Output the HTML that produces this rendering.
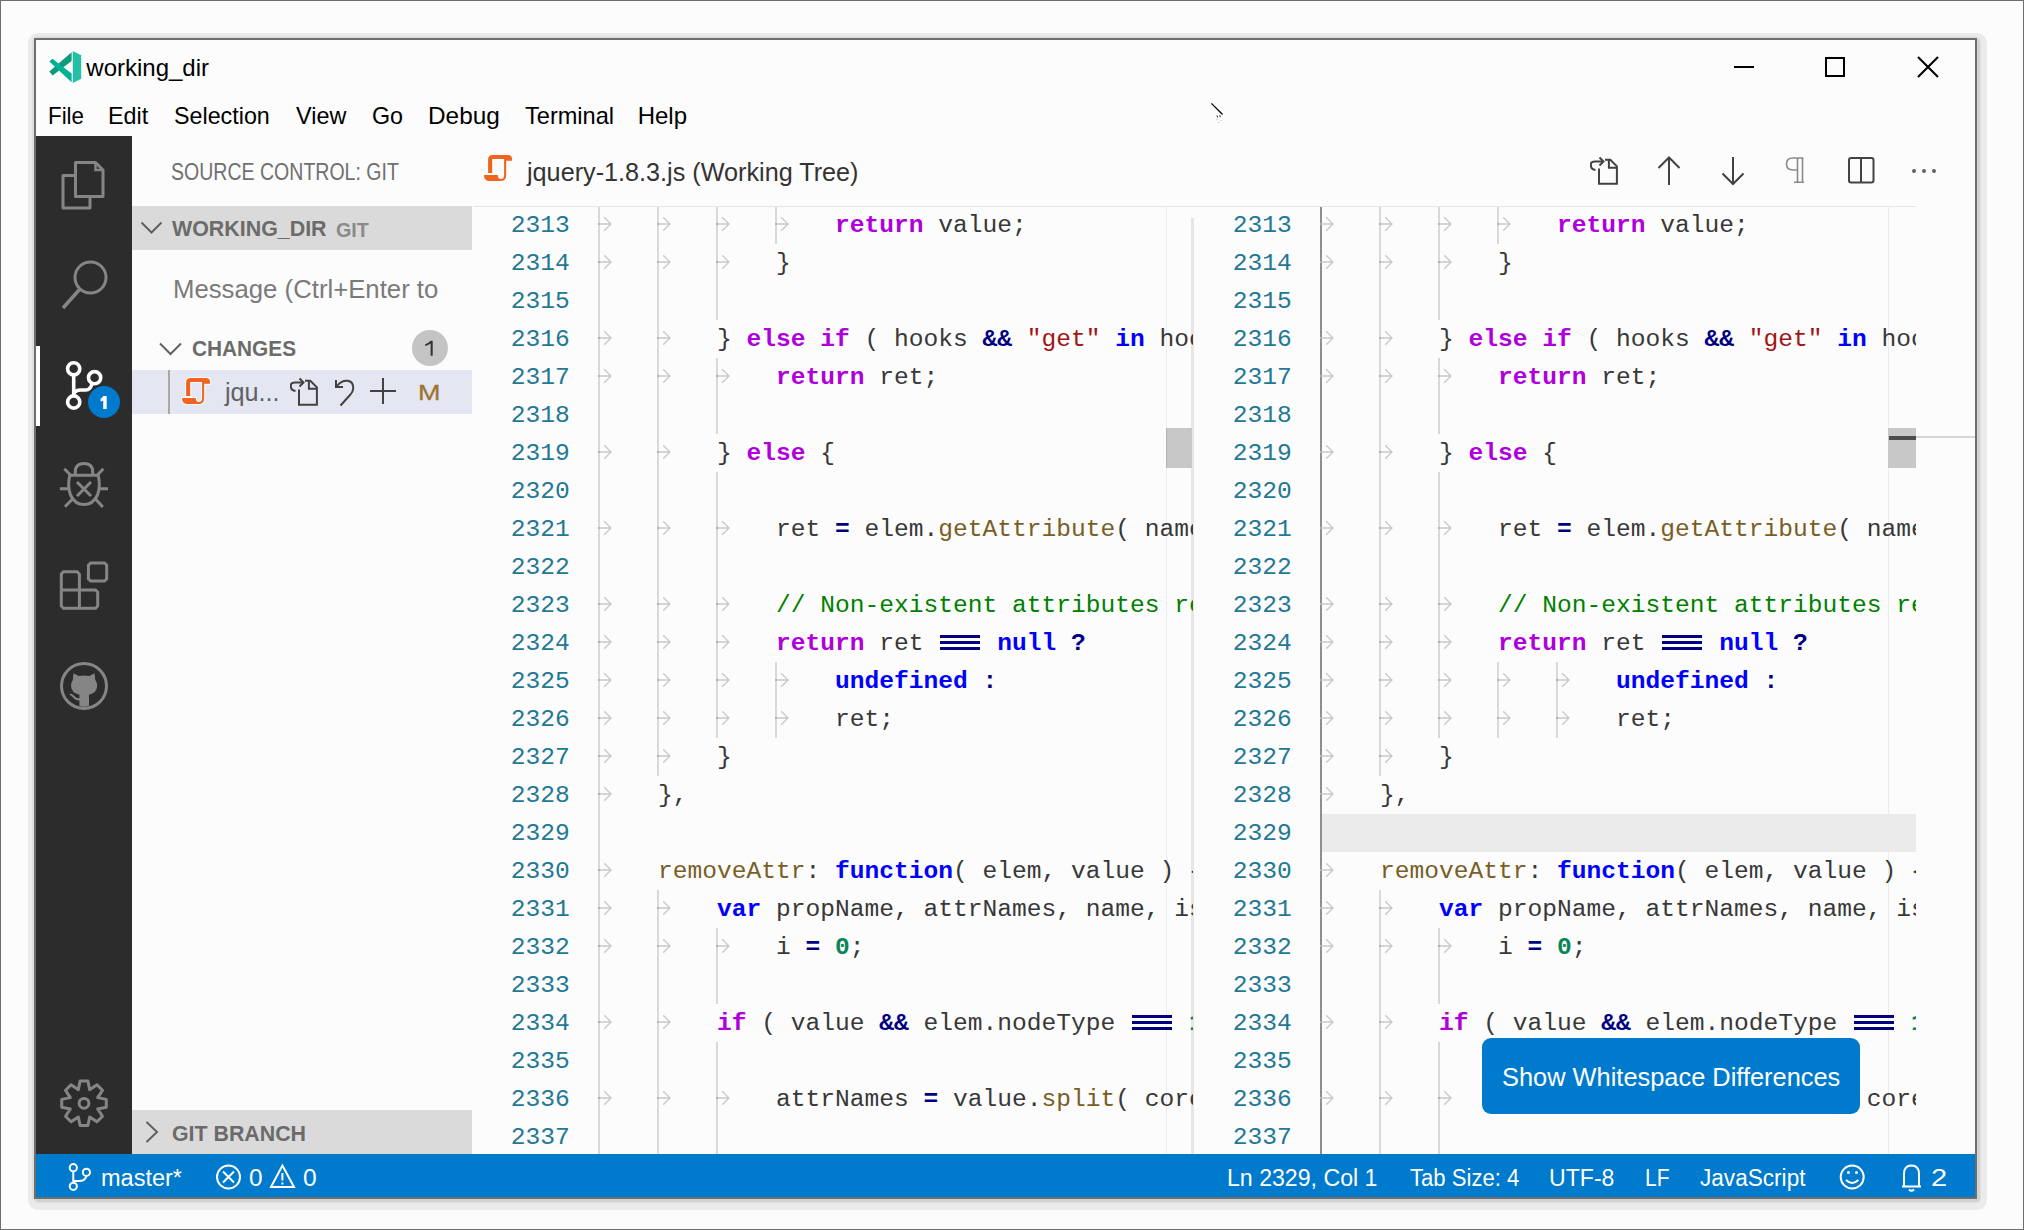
<!DOCTYPE html>
<html><head><meta charset="utf-8"><style>
html,body{margin:0;padding:0}
body{width:2024px;height:1230px;position:relative;overflow:hidden;background:#fcfcfc;font-family:"Liberation Sans",sans-serif}
.t{position:absolute;line-height:0;white-space:pre}
.ln{position:absolute;font-family:"Liberation Mono",monospace;font-size:24.59px;line-height:38px;height:38px;color:#237893;white-space:pre}
.cl{position:absolute;font-family:"Liberation Mono",monospace;font-size:24.59px;line-height:38px;height:38px;white-space:pre}
.eq{display:inline-block;vertical-align:top;height:38px;width:44.25px;background:linear-gradient(#000080,#000080) 2px 10.5px/40px 3px no-repeat,linear-gradient(#000080,#000080) 2px 16.2px/40px 3px no-repeat,linear-gradient(#000080,#000080) 2px 22px/40px 3px no-repeat}
</style></head><body>
<div style="position:absolute;left:28px;top:33px;width:1959px;height:1177px;background:#ebebeb;border-radius:10px"></div>
<div style="position:absolute;left:32px;top:36px;width:1949px;height:1167px;background:#dfdfdf;border-radius:6px"></div>
<div style="position:absolute;left:36px;top:40px;width:1944px;height:1162px;background:#d3d3d3;border-radius:3px"></div>
<div style="position:absolute;left:34px;top:38px;width:1943px;height:1161px;box-sizing:border-box;border:2px solid #6e6e6e;background:#fcfcfc"></div>
<div style="position:absolute;left:0;top:0;width:2024px;height:1230px;box-sizing:border-box;border:1px solid #6e6e6e"></div>
<svg style="position:absolute;left:49px;top:51px" width="33" height="33" viewBox="0 0 33 33">
<path d="M0.3 20.6 L22.6 1.2 L22.6 10.1 L3.6 24.4 Z" fill="#0d9b7b"/>
<path d="M0.3 10.6 L3.4 7.7 L22.6 22.5 L22.6 31.2 Z" fill="#00b294"/>
<path d="M23.8 0 L32.2 4.3 L32.2 27.8 L23.8 32 Z" fill="#24bfa5"/>
</svg>
<span class="t" style="left:86.30px;top:68.28px;font-family:'Liberation Sans';font-size:24.00px;font-weight:400;color:#000;">working_dir</span>
<div style="position:absolute;left:1734px;top:66px;width:20px;height:2px;background:#000"></div>
<div style="position:absolute;left:1825px;top:57px;width:20px;height:20px;box-sizing:border-box;border:2px solid #000"></div>
<svg style="position:absolute;left:1916px;top:55px" width="24" height="24" viewBox="0 0 24 24"><path d="M2 2 L22 22 M22 2 L2 22" stroke="#000" stroke-width="2.1"/></svg>
<svg style="position:absolute;left:1205px;top:98px" width="24" height="26" viewBox="0 0 24 26"><path d="M6.4 5.4 L17.6 16.5" stroke="#000" stroke-width="1.3"/><path d="M12 17.5 l0.6 2 M14.8 17.2 l0.5 2 M11.7 21 l0.2 0.3 M13 24 l0.3 0.3 M15.5 22 l0.3 0.3" stroke="#222" stroke-width="1"/></svg>
<span class="t" style="left:47.64px;top:115.68px;font-family:'Liberation Sans';font-size:24.00px;font-weight:400;color:#000;transform:scaleX(0.9306);transform-origin:0 0;">File</span>
<span class="t" style="left:107.66px;top:115.68px;font-family:'Liberation Sans';font-size:24.00px;font-weight:400;color:#000;transform:scaleX(0.9718);transform-origin:0 0;">Edit</span>
<span class="t" style="left:174.23px;top:115.68px;font-family:'Liberation Sans';font-size:24.00px;font-weight:400;color:#000;transform:scaleX(0.9701);transform-origin:0 0;">Selection</span>
<span class="t" style="left:296.00px;top:115.68px;font-family:'Liberation Sans';font-size:24.00px;font-weight:400;color:#000;transform:scaleX(0.9750);transform-origin:0 0;">View</span>
<span class="t" style="left:371.63px;top:115.68px;font-family:'Liberation Sans';font-size:24.00px;font-weight:400;color:#000;transform:scaleX(0.9700);transform-origin:0 0;">Go</span>
<span class="t" style="left:427.67px;top:115.68px;font-family:'Liberation Sans';font-size:24.00px;font-weight:400;color:#000;transform:scaleX(1.0149);transform-origin:0 0;">Debug</span>
<span class="t" style="left:524.60px;top:115.68px;font-family:'Liberation Sans';font-size:24.00px;font-weight:400;color:#000;transform:scaleX(0.9820);transform-origin:0 0;">Terminal</span>
<span class="t" style="left:637.70px;top:115.68px;font-family:'Liberation Sans';font-size:24.00px;font-weight:400;color:#000;">Help</span>
<div style="position:absolute;left:36px;top:136px;width:96px;height:1018px;background:#2c2c2c"></div>
<div style="position:absolute;left:36px;top:346px;width:4px;height:80px;background:#fff"></div>
<svg style="position:absolute;left:36px;top:136px" width="96" height="1018" viewBox="36 136 96 1018" fill="none" stroke="#858585" stroke-width="3">
<path d="M75.5 175.5 L63 175.5 L63 208 L90 208 L90 197" stroke-linejoin="round"/>
<path d="M75.5 162.5 L95.5 162.5 L103 170 L103 196.5 L75.5 196.5 Z" stroke-linejoin="round"/>
<path d="M95.5 162.5 L95.5 170 L103 170" stroke-width="2.5"/>
<circle cx="90.5" cy="277.5" r="15.5"/>
<path d="M79.5 289.5 L63 308" stroke-width="3.5"/>
</svg>
<svg style="position:absolute;left:36px;top:136px" width="96" height="1018" viewBox="36 136 96 1018" fill="none" stroke="#fff" stroke-width="3.6">
<circle cx="73.7" cy="368.8" r="6.1"/>
<circle cx="94.6" cy="377.7" r="6.1"/>
<circle cx="73.7" cy="402" r="6.1"/>
<path d="M73.7 375 L73.7 396"/>
<path d="M73.7 394 Q 75 390 81 390 L86 390 Q 90 390 92 384"/>
</svg>
<div style="position:absolute;left:88px;top:386px;width:32px;height:32px;border-radius:50%;background:#007acc"></div>
<svg style="position:absolute;left:96px;top:392px" width="16" height="20" viewBox="96 392 16 20"><path d="M103.2 396 L106.7 396 L106.7 409 L103.2 409 L103.2 400.4 Q102 401.2 100.6 401.6 L100.6 398.7 Q102.6 397.9 103.2 396 Z" fill="#fff"/></svg>
<svg style="position:absolute;left:36px;top:136px" width="96" height="1018" viewBox="36 136 96 1018" fill="none" stroke="#858585" stroke-width="3">
<path d="M75.3 475 L75.3 472 Q 75.3 463.6 84 463.6 Q 92.7 463.6 92.7 472 L92.7 475"/>
<path d="M69.8 475.2 L98.2 475.2 Q 100.8 486 97.5 495 Q 93 504.6 84 504.6 Q 75 504.6 70.5 495 Q 67.2 486 69.8 475.2 Z" stroke-linejoin="round"/>
<path d="M64.3 468.8 L70.5 475 M103.3 468.8 L97.5 475 M59.8 488.8 L68 488.8 M108 488.8 L100 488.8 M65 506.8 L72.5 499 M102.8 507 L95.5 499"/>
<path d="M77 482 L91 496 M91 482 L77 496"/>
</svg>
<svg style="position:absolute;left:36px;top:136px" width="96" height="1018" viewBox="36 136 96 1018" fill="none" stroke="#858585" stroke-width="3" stroke-linejoin="round">
<path d="M61.3 574 L63.5 571.8 L77.2 571.8 L79.4 574 L79.4 589.9 L95.5 589.9 L97.7 592.1 L97.7 606 L95.5 608.2 L63.5 608.2 L61.3 606 Z" stroke-linejoin="miter"/>
<path d="M61.3 589.9 L79.4 589.9 L79.4 608.2"/>
<path d="M88.4 565.2 L90.6 563 L104.5 563 L106.7 565.2 L106.7 578.9 L104.5 581.1 L90.6 581.1 L88.4 578.9 Z" stroke-linejoin="miter"/>
</svg>
<svg style="position:absolute;left:36px;top:136px" width="96" height="1018" viewBox="36 136 96 1018">
<circle cx="84" cy="686" r="22.5" fill="none" stroke="#858585" stroke-width="3"/>
<path d="M73.5 673.3 L78.8 676 Q84 675 89.5 676 L94.5 673.3 L95.3 680 Q97.5 683 97.2 686 Q96.8 693 89 694.8 L89 706 Q84 707.5 79.4 706 L79.4 700.4 Q75.5 700.8 73.2 697.8 Q71.8 695.8 69.5 694.8 L70.3 693.4 Q73 694 75 696.4 Q76.8 698.4 79.4 698.3 L79.4 694.8 Q71.5 693 71 686 Q70.8 683 72.8 680 Z" fill="#858585"/>
</svg>
<svg style="position:absolute;left:36px;top:136px" width="96" height="1018" viewBox="36 136 96 1018" fill="none" stroke="#858585" stroke-width="3" stroke-linejoin="round">
<path d="M78.34 1089.63 L80.08 1081.04 L87.92 1081.04 L89.66 1089.63 L96.96 1084.79 L102.51 1090.34 L97.67 1097.64 L106.26 1099.38 L106.26 1107.22 L97.67 1108.96 L102.51 1116.26 L96.96 1121.81 L89.66 1116.97 L87.92 1125.56 L80.08 1125.56 L78.34 1116.97 L71.04 1121.81 L65.49 1116.26 L70.33 1108.96 L61.74 1107.22 L61.74 1099.38 L70.33 1097.64 L65.49 1090.34 L71.04 1084.79 Z"/>
<circle cx="84" cy="1103.3" r="4.9"/>
</svg>
<span class="t" style="left:171.45px;top:172.23px;font-family:'Liberation Sans';font-size:23.00px;font-weight:400;color:#6f6f6f;transform:scaleX(0.8491);transform-origin:0 0;">SOURCE CONTROL: GIT</span>
<div style="position:absolute;left:132px;top:206px;width:340px;height:44px;background:#dadada"></div>
<svg style="position:absolute;left:132px;top:200px" width="340" height="1000" viewBox="132 200 340 1000" fill="none" stroke="#616161" stroke-width="2"><path d="M141.5 222.5 L151.5 232.5 L161.5 222.5"/><path d="M160 343.5 L170.5 354 L181 343.5"/></svg>
<span class="t" style="left:172.30px;top:229.18px;font-family:'Liberation Sans';font-size:22.00px;font-weight:700;color:#6b6b6b;transform:scaleX(0.9728);transform-origin:0 0;">WORKING_DIR</span>
<span class="t" style="left:335.59px;top:229.74px;font-family:'Liberation Sans';font-size:19.50px;font-weight:700;color:#8a8a8a;transform:scaleX(1.0129);transform-origin:0 0;">GIT</span>
<span class="t" style="left:173.28px;top:288.96px;font-family:'Liberation Sans';font-size:25.50px;font-weight:400;color:#7a7a7a;transform:scaleX(1.0092);transform-origin:0 0;">Message (Ctrl+Enter to</span>
<span class="t" style="left:191.55px;top:348.98px;font-family:'Liberation Sans';font-size:22.00px;font-weight:700;color:#6b6b6b;transform:scaleX(0.9454);transform-origin:0 0;">CHANGES</span>
<div style="position:absolute;left:412px;top:330px;width:36px;height:36px;border-radius:50%;background:#c4c4c4"></div>
<svg style="position:absolute;left:420px;top:336px" width="20" height="24" viewBox="420 336 20 24"><path d="M430.6 340.7 L432.7 340.7 L432.7 355.8 L430.6 355.8 L430.6 343.6 Q428.3 345.2 425.2 346 L425.2 344.2 Q428.6 343 430.6 340.7 Z" fill="#333"/></svg>
<div style="position:absolute;left:132px;top:370px;width:340px;height:44px;background:#e4e6f1"></div>
<div style="position:absolute;left:168px;top:370px;width:2px;height:44px;background:#a8a8a8"></div>
<svg style="position:absolute;left:176px;top:371px" width="40" height="40" viewBox="0 0 40 40"><path d="M10.1 25 L10.1 11.5 Q10.1 7 14.6 7 L30 7 Q34 7 34 11 L34 12.8 L28.2 12.8 L28.2 27 Q28.2 33 22.5 33 L11.5 33 Q6 33 6 27 L19.8 27 Q19.8 31 23 31 Q26.1 31 26.1 27 L26.1 11 L14.2 11 L14.2 25 Z" fill="#f0641f" stroke="#fafbff" stroke-width="2.2" paint-order="stroke"/></svg>
<span class="t" style="left:225.41px;top:392.44px;font-family:'Liberation Sans';font-size:25.00px;font-weight:400;color:#616161;transform:scaleX(1.0075);transform-origin:0 0;">jqu...</span>
<svg style="position:absolute;left:290px;top:377px" width="30" height="30" viewBox="0 0 30 30" fill="none" stroke="#424242" stroke-width="2"><path d="M9 12.5 L9 27.8 L26.9 27.8 L26.9 10.4 L20.3 3.8 L15 3.8" /><path d="M18.9 3.8 L18.9 11.8 L26.9 11.8" /><path d="M5.5 14 Q0.8 13.5 0.8 8.8 Q0.8 5.5 5 5.5 L13 5.5" /><path d="M9.5 1.5 L13.5 5.5 L9.5 9.5" /></svg>
<svg style="position:absolute;left:330px;top:376px" width="30" height="32" viewBox="0 0 30 32" fill="none" stroke="#424242" stroke-width="2"><path d="M7 10 Q11 4.5 17.5 4.8 Q23.5 5.5 23.2 12.5 Q23 16 20 19 L10.5 29.5"/><path d="M6 4 L6 11 L13 11"/></svg>
<div style="position:absolute;left:370px;top:390px;width:26px;height:2px;background:#424242"></div>
<div style="position:absolute;left:382px;top:378px;width:2px;height:26px;background:#424242"></div>
<span class="t" style="left:417.60px;top:393.30px;font-family:'Liberation Sans';font-size:22.50px;font-weight:400;color:#9c7432;transform:scaleX(1.2000);transform-origin:0 0;-webkit-text-stroke:0.3px #9c7432;">M</span>
<div style="position:absolute;left:132px;top:1110px;width:340px;height:44px;background:#dadada"></div>
<svg style="position:absolute;left:132px;top:1100px" width="100" height="60" viewBox="132 1100 100 60" fill="none" stroke="#616161" stroke-width="2"><path d="M146.5 1122 L157 1132 L146.5 1142"/></svg>
<span class="t" style="left:171.63px;top:1133.58px;font-family:'Liberation Sans';font-size:22.00px;font-weight:700;color:#6b6b6b;transform:scaleX(0.9706);transform-origin:0 0;">GIT BRANCH</span>
<svg style="position:absolute;left:478px;top:148px" width="40" height="40" viewBox="0 0 40 40"><path d="M10.1 25 L10.1 11.5 Q10.1 7 14.6 7 L30 7 Q34 7 34 11 L34 12.8 L28.2 12.8 L28.2 27 Q28.2 33 22.5 33 L11.5 33 Q6 33 6 27 L19.8 27 Q19.8 31 23 31 Q26.1 31 26.1 27 L26.1 11 L14.2 11 L14.2 25 Z" fill="#f0641f"/></svg>
<span class="t" style="left:527.29px;top:172.06px;font-family:'Liberation Sans';font-size:25.50px;font-weight:400;color:#333;transform:scaleX(0.9884);transform-origin:0 0;">jquery-1.8.3.js (Working Tree)</span>
<svg style="position:absolute;left:1590px;top:156px" width="30" height="30" viewBox="0 0 30 30" fill="none" stroke="#424242" stroke-width="2"><path d="M9 12.5 L9 27.8 L26.9 27.8 L26.9 10.4 L20.3 3.8 L15 3.8" /><path d="M18.9 3.8 L18.9 11.8 L26.9 11.8" /><path d="M5.5 14 Q0.8 13.5 0.8 8.8 Q0.8 5.5 5 5.5 L13 5.5" /><path d="M9.5 1.5 L13.5 5.5 L9.5 9.5" /></svg>
<svg style="position:absolute;left:1650px;top:150px" width="300" height="40" viewBox="1650 150 300 40" fill="none" stroke="#424242" stroke-width="2">
<path d="M1669 157.5 L1669 185 M1658.5 168 L1669 157.5 L1679.5 168"/>
<path d="M1733 157 L1733 184.5 M1722.5 173.5 L1733 184 L1743.5 173.5"/>
<rect x="1849" y="158" width="24.5" height="24.5" rx="2"/>
<path d="M1861 158 L1861 182.5"/>
</svg>
<svg style="position:absolute;left:1780px;top:150px" width="30" height="40" viewBox="1780 150 30 40" fill="none" stroke="#8a8a8a" stroke-width="1.6">
<path d="M1803.5 158 L1793 158 Q1786.5 158 1786.5 164 Q1786.5 170 1793 170 L1797.5 170"/>
<path d="M1797.5 158 L1797.5 182 M1802.5 158 L1802.5 182 M1794 182.3 L1804 182.3"/>
</svg>
<div style="position:absolute;left:1911.8px;top:168.7px;width:4.4px;height:4.4px;border-radius:50%;background:#616161"></div>
<div style="position:absolute;left:1921.8px;top:168.7px;width:4.4px;height:4.4px;border-radius:50%;background:#616161"></div>
<div style="position:absolute;left:1931.8px;top:168.7px;width:4.4px;height:4.4px;border-radius:50%;background:#616161"></div>
<div style="position:absolute;left:474px;top:206px;width:1442px;height:1px;background:#e6e6e6"></div>
<div style="position:absolute;left:1166px;top:207px;width:1px;height:947px;background:#ececec"></div>
<div style="position:absolute;left:1191px;top:218px;width:3px;height:936px;background:#e6e6e6"></div>
<div style="position:absolute;left:1888px;top:207px;width:1px;height:947px;background:#ececec"></div>
<div style="position:absolute;left:474px;top:207px;width:719px;height:947px;overflow:hidden"><svg style="position:absolute;left:0;top:0" width="719" height="947" viewBox="474 207 719 947"><rect x="598.0" y="206" width="2" height="38" fill="#d9d9d9"/><rect x="657.0" y="206" width="2" height="38" fill="#d9d9d9"/><rect x="716.0" y="206" width="2" height="38" fill="#d9d9d9"/><rect x="775.0" y="206" width="2" height="38" fill="#d9d9d9"/><rect x="598.0" y="223.0" width="2" height="2" fill="#b4b4b4"/><path d="M600.0 224.0 H611.0 M604.2 217.2 L611.0 224.0 L604.2 230.8" stroke="#c8c8c8" stroke-width="1.3" fill="none"/><rect x="657.0" y="223.0" width="2" height="2" fill="#b4b4b4"/><path d="M659.0 224.0 H670.0 M663.2 217.2 L670.0 224.0 L663.2 230.8" stroke="#c8c8c8" stroke-width="1.3" fill="none"/><rect x="716.0" y="223.0" width="2" height="2" fill="#b4b4b4"/><path d="M718.0 224.0 H729.0 M722.2 217.2 L729.0 224.0 L722.2 230.8" stroke="#c8c8c8" stroke-width="1.3" fill="none"/><rect x="775.0" y="223.0" width="2" height="2" fill="#b4b4b4"/><path d="M777.0 224.0 H788.0 M781.2 217.2 L788.0 224.0 L781.2 230.8" stroke="#c8c8c8" stroke-width="1.3" fill="none"/><rect x="598.0" y="244" width="2" height="38" fill="#d9d9d9"/><rect x="657.0" y="244" width="2" height="38" fill="#d9d9d9"/><rect x="716.0" y="244" width="2" height="38" fill="#d9d9d9"/><rect x="598.0" y="261.0" width="2" height="2" fill="#b4b4b4"/><path d="M600.0 262.0 H611.0 M604.2 255.2 L611.0 262.0 L604.2 268.8" stroke="#c8c8c8" stroke-width="1.3" fill="none"/><rect x="657.0" y="261.0" width="2" height="2" fill="#b4b4b4"/><path d="M659.0 262.0 H670.0 M663.2 255.2 L670.0 262.0 L663.2 268.8" stroke="#c8c8c8" stroke-width="1.3" fill="none"/><rect x="716.0" y="261.0" width="2" height="2" fill="#b4b4b4"/><path d="M718.0 262.0 H729.0 M722.2 255.2 L729.0 262.0 L722.2 268.8" stroke="#c8c8c8" stroke-width="1.3" fill="none"/><rect x="598.0" y="282" width="2" height="38" fill="#d9d9d9"/><rect x="657.0" y="282" width="2" height="38" fill="#d9d9d9"/><rect x="716.0" y="282" width="2" height="38" fill="#d9d9d9"/><rect x="598.0" y="320" width="2" height="38" fill="#d9d9d9"/><rect x="657.0" y="320" width="2" height="38" fill="#d9d9d9"/><rect x="598.0" y="337.0" width="2" height="2" fill="#b4b4b4"/><path d="M600.0 338.0 H611.0 M604.2 331.2 L611.0 338.0 L604.2 344.8" stroke="#c8c8c8" stroke-width="1.3" fill="none"/><rect x="657.0" y="337.0" width="2" height="2" fill="#b4b4b4"/><path d="M659.0 338.0 H670.0 M663.2 331.2 L670.0 338.0 L663.2 344.8" stroke="#c8c8c8" stroke-width="1.3" fill="none"/><rect x="598.0" y="358" width="2" height="38" fill="#d9d9d9"/><rect x="657.0" y="358" width="2" height="38" fill="#d9d9d9"/><rect x="716.0" y="358" width="2" height="38" fill="#d9d9d9"/><rect x="598.0" y="375.0" width="2" height="2" fill="#b4b4b4"/><path d="M600.0 376.0 H611.0 M604.2 369.2 L611.0 376.0 L604.2 382.8" stroke="#c8c8c8" stroke-width="1.3" fill="none"/><rect x="657.0" y="375.0" width="2" height="2" fill="#b4b4b4"/><path d="M659.0 376.0 H670.0 M663.2 369.2 L670.0 376.0 L663.2 382.8" stroke="#c8c8c8" stroke-width="1.3" fill="none"/><rect x="716.0" y="375.0" width="2" height="2" fill="#b4b4b4"/><path d="M718.0 376.0 H729.0 M722.2 369.2 L729.0 376.0 L722.2 382.8" stroke="#c8c8c8" stroke-width="1.3" fill="none"/><rect x="598.0" y="396" width="2" height="38" fill="#d9d9d9"/><rect x="657.0" y="396" width="2" height="38" fill="#d9d9d9"/><rect x="716.0" y="396" width="2" height="38" fill="#d9d9d9"/><rect x="598.0" y="434" width="2" height="38" fill="#d9d9d9"/><rect x="657.0" y="434" width="2" height="38" fill="#d9d9d9"/><rect x="598.0" y="451.0" width="2" height="2" fill="#b4b4b4"/><path d="M600.0 452.0 H611.0 M604.2 445.2 L611.0 452.0 L604.2 458.8" stroke="#c8c8c8" stroke-width="1.3" fill="none"/><rect x="657.0" y="451.0" width="2" height="2" fill="#b4b4b4"/><path d="M659.0 452.0 H670.0 M663.2 445.2 L670.0 452.0 L663.2 458.8" stroke="#c8c8c8" stroke-width="1.3" fill="none"/><rect x="598.0" y="472" width="2" height="38" fill="#d9d9d9"/><rect x="657.0" y="472" width="2" height="38" fill="#d9d9d9"/><rect x="716.0" y="472" width="2" height="38" fill="#d9d9d9"/><rect x="598.0" y="510" width="2" height="38" fill="#d9d9d9"/><rect x="657.0" y="510" width="2" height="38" fill="#d9d9d9"/><rect x="716.0" y="510" width="2" height="38" fill="#d9d9d9"/><rect x="598.0" y="527.0" width="2" height="2" fill="#b4b4b4"/><path d="M600.0 528.0 H611.0 M604.2 521.2 L611.0 528.0 L604.2 534.8" stroke="#c8c8c8" stroke-width="1.3" fill="none"/><rect x="657.0" y="527.0" width="2" height="2" fill="#b4b4b4"/><path d="M659.0 528.0 H670.0 M663.2 521.2 L670.0 528.0 L663.2 534.8" stroke="#c8c8c8" stroke-width="1.3" fill="none"/><rect x="716.0" y="527.0" width="2" height="2" fill="#b4b4b4"/><path d="M718.0 528.0 H729.0 M722.2 521.2 L729.0 528.0 L722.2 534.8" stroke="#c8c8c8" stroke-width="1.3" fill="none"/><rect x="598.0" y="548" width="2" height="38" fill="#d9d9d9"/><rect x="657.0" y="548" width="2" height="38" fill="#d9d9d9"/><rect x="716.0" y="548" width="2" height="38" fill="#d9d9d9"/><rect x="598.0" y="586" width="2" height="38" fill="#d9d9d9"/><rect x="657.0" y="586" width="2" height="38" fill="#d9d9d9"/><rect x="716.0" y="586" width="2" height="38" fill="#d9d9d9"/><rect x="598.0" y="603.0" width="2" height="2" fill="#b4b4b4"/><path d="M600.0 604.0 H611.0 M604.2 597.2 L611.0 604.0 L604.2 610.8" stroke="#c8c8c8" stroke-width="1.3" fill="none"/><rect x="657.0" y="603.0" width="2" height="2" fill="#b4b4b4"/><path d="M659.0 604.0 H670.0 M663.2 597.2 L670.0 604.0 L663.2 610.8" stroke="#c8c8c8" stroke-width="1.3" fill="none"/><rect x="716.0" y="603.0" width="2" height="2" fill="#b4b4b4"/><path d="M718.0 604.0 H729.0 M722.2 597.2 L729.0 604.0 L722.2 610.8" stroke="#c8c8c8" stroke-width="1.3" fill="none"/><rect x="598.0" y="624" width="2" height="38" fill="#d9d9d9"/><rect x="657.0" y="624" width="2" height="38" fill="#d9d9d9"/><rect x="716.0" y="624" width="2" height="38" fill="#d9d9d9"/><rect x="598.0" y="641.0" width="2" height="2" fill="#b4b4b4"/><path d="M600.0 642.0 H611.0 M604.2 635.2 L611.0 642.0 L604.2 648.8" stroke="#c8c8c8" stroke-width="1.3" fill="none"/><rect x="657.0" y="641.0" width="2" height="2" fill="#b4b4b4"/><path d="M659.0 642.0 H670.0 M663.2 635.2 L670.0 642.0 L663.2 648.8" stroke="#c8c8c8" stroke-width="1.3" fill="none"/><rect x="716.0" y="641.0" width="2" height="2" fill="#b4b4b4"/><path d="M718.0 642.0 H729.0 M722.2 635.2 L729.0 642.0 L722.2 648.8" stroke="#c8c8c8" stroke-width="1.3" fill="none"/><rect x="598.0" y="662" width="2" height="38" fill="#d9d9d9"/><rect x="657.0" y="662" width="2" height="38" fill="#d9d9d9"/><rect x="716.0" y="662" width="2" height="38" fill="#d9d9d9"/><rect x="775.0" y="662" width="2" height="38" fill="#d9d9d9"/><rect x="598.0" y="679.0" width="2" height="2" fill="#b4b4b4"/><path d="M600.0 680.0 H611.0 M604.2 673.2 L611.0 680.0 L604.2 686.8" stroke="#c8c8c8" stroke-width="1.3" fill="none"/><rect x="657.0" y="679.0" width="2" height="2" fill="#b4b4b4"/><path d="M659.0 680.0 H670.0 M663.2 673.2 L670.0 680.0 L663.2 686.8" stroke="#c8c8c8" stroke-width="1.3" fill="none"/><rect x="716.0" y="679.0" width="2" height="2" fill="#b4b4b4"/><path d="M718.0 680.0 H729.0 M722.2 673.2 L729.0 680.0 L722.2 686.8" stroke="#c8c8c8" stroke-width="1.3" fill="none"/><rect x="775.0" y="679.0" width="2" height="2" fill="#b4b4b4"/><path d="M777.0 680.0 H788.0 M781.2 673.2 L788.0 680.0 L781.2 686.8" stroke="#c8c8c8" stroke-width="1.3" fill="none"/><rect x="598.0" y="700" width="2" height="38" fill="#d9d9d9"/><rect x="657.0" y="700" width="2" height="38" fill="#d9d9d9"/><rect x="716.0" y="700" width="2" height="38" fill="#d9d9d9"/><rect x="775.0" y="700" width="2" height="38" fill="#d9d9d9"/><rect x="598.0" y="717.0" width="2" height="2" fill="#b4b4b4"/><path d="M600.0 718.0 H611.0 M604.2 711.2 L611.0 718.0 L604.2 724.8" stroke="#c8c8c8" stroke-width="1.3" fill="none"/><rect x="657.0" y="717.0" width="2" height="2" fill="#b4b4b4"/><path d="M659.0 718.0 H670.0 M663.2 711.2 L670.0 718.0 L663.2 724.8" stroke="#c8c8c8" stroke-width="1.3" fill="none"/><rect x="716.0" y="717.0" width="2" height="2" fill="#b4b4b4"/><path d="M718.0 718.0 H729.0 M722.2 711.2 L729.0 718.0 L722.2 724.8" stroke="#c8c8c8" stroke-width="1.3" fill="none"/><rect x="775.0" y="717.0" width="2" height="2" fill="#b4b4b4"/><path d="M777.0 718.0 H788.0 M781.2 711.2 L788.0 718.0 L781.2 724.8" stroke="#c8c8c8" stroke-width="1.3" fill="none"/><rect x="598.0" y="738" width="2" height="38" fill="#d9d9d9"/><rect x="657.0" y="738" width="2" height="38" fill="#d9d9d9"/><rect x="598.0" y="755.0" width="2" height="2" fill="#b4b4b4"/><path d="M600.0 756.0 H611.0 M604.2 749.2 L611.0 756.0 L604.2 762.8" stroke="#c8c8c8" stroke-width="1.3" fill="none"/><rect x="657.0" y="755.0" width="2" height="2" fill="#b4b4b4"/><path d="M659.0 756.0 H670.0 M663.2 749.2 L670.0 756.0 L663.2 762.8" stroke="#c8c8c8" stroke-width="1.3" fill="none"/><rect x="598.0" y="776" width="2" height="38" fill="#d9d9d9"/><rect x="598.0" y="793.0" width="2" height="2" fill="#b4b4b4"/><path d="M600.0 794.0 H611.0 M604.2 787.2 L611.0 794.0 L604.2 800.8" stroke="#c8c8c8" stroke-width="1.3" fill="none"/><rect x="598.0" y="814" width="2" height="38" fill="#d9d9d9"/><rect x="598.0" y="852" width="2" height="38" fill="#d9d9d9"/><rect x="598.0" y="869.0" width="2" height="2" fill="#b4b4b4"/><path d="M600.0 870.0 H611.0 M604.2 863.2 L611.0 870.0 L604.2 876.8" stroke="#c8c8c8" stroke-width="1.3" fill="none"/><rect x="598.0" y="890" width="2" height="38" fill="#d9d9d9"/><rect x="657.0" y="890" width="2" height="38" fill="#d9d9d9"/><rect x="598.0" y="907.0" width="2" height="2" fill="#b4b4b4"/><path d="M600.0 908.0 H611.0 M604.2 901.2 L611.0 908.0 L604.2 914.8" stroke="#c8c8c8" stroke-width="1.3" fill="none"/><rect x="657.0" y="907.0" width="2" height="2" fill="#b4b4b4"/><path d="M659.0 908.0 H670.0 M663.2 901.2 L670.0 908.0 L663.2 914.8" stroke="#c8c8c8" stroke-width="1.3" fill="none"/><rect x="598.0" y="928" width="2" height="38" fill="#d9d9d9"/><rect x="657.0" y="928" width="2" height="38" fill="#d9d9d9"/><rect x="716.0" y="928" width="2" height="38" fill="#d9d9d9"/><rect x="598.0" y="945.0" width="2" height="2" fill="#b4b4b4"/><path d="M600.0 946.0 H611.0 M604.2 939.2 L611.0 946.0 L604.2 952.8" stroke="#c8c8c8" stroke-width="1.3" fill="none"/><rect x="657.0" y="945.0" width="2" height="2" fill="#b4b4b4"/><path d="M659.0 946.0 H670.0 M663.2 939.2 L670.0 946.0 L663.2 952.8" stroke="#c8c8c8" stroke-width="1.3" fill="none"/><rect x="716.0" y="945.0" width="2" height="2" fill="#b4b4b4"/><path d="M718.0 946.0 H729.0 M722.2 939.2 L729.0 946.0 L722.2 952.8" stroke="#c8c8c8" stroke-width="1.3" fill="none"/><rect x="598.0" y="966" width="2" height="38" fill="#d9d9d9"/><rect x="657.0" y="966" width="2" height="38" fill="#d9d9d9"/><rect x="716.0" y="966" width="2" height="38" fill="#d9d9d9"/><rect x="598.0" y="1004" width="2" height="38" fill="#d9d9d9"/><rect x="657.0" y="1004" width="2" height="38" fill="#d9d9d9"/><rect x="598.0" y="1021.0" width="2" height="2" fill="#b4b4b4"/><path d="M600.0 1022.0 H611.0 M604.2 1015.2 L611.0 1022.0 L604.2 1028.8" stroke="#c8c8c8" stroke-width="1.3" fill="none"/><rect x="657.0" y="1021.0" width="2" height="2" fill="#b4b4b4"/><path d="M659.0 1022.0 H670.0 M663.2 1015.2 L670.0 1022.0 L663.2 1028.8" stroke="#c8c8c8" stroke-width="1.3" fill="none"/><rect x="598.0" y="1042" width="2" height="38" fill="#d9d9d9"/><rect x="657.0" y="1042" width="2" height="38" fill="#d9d9d9"/><rect x="716.0" y="1042" width="2" height="38" fill="#d9d9d9"/><rect x="598.0" y="1080" width="2" height="38" fill="#d9d9d9"/><rect x="657.0" y="1080" width="2" height="38" fill="#d9d9d9"/><rect x="716.0" y="1080" width="2" height="38" fill="#d9d9d9"/><rect x="598.0" y="1097.0" width="2" height="2" fill="#b4b4b4"/><path d="M600.0 1098.0 H611.0 M604.2 1091.2 L611.0 1098.0 L604.2 1104.8" stroke="#c8c8c8" stroke-width="1.3" fill="none"/><rect x="657.0" y="1097.0" width="2" height="2" fill="#b4b4b4"/><path d="M659.0 1098.0 H670.0 M663.2 1091.2 L670.0 1098.0 L663.2 1104.8" stroke="#c8c8c8" stroke-width="1.3" fill="none"/><rect x="716.0" y="1097.0" width="2" height="2" fill="#b4b4b4"/><path d="M718.0 1098.0 H729.0 M722.2 1091.2 L729.0 1098.0 L722.2 1104.8" stroke="#c8c8c8" stroke-width="1.3" fill="none"/><rect x="598.0" y="1118" width="2" height="38" fill="#d9d9d9"/><rect x="657.0" y="1118" width="2" height="38" fill="#d9d9d9"/><rect x="716.0" y="1118" width="2" height="38" fill="#d9d9d9"/></svg><div class="ln" style="left:36.70px;top:-0.50px">2313</div><div class="cl" style="left:361.00px;top:-0.50px"><span style="color:#af00db;font-weight:700">return</span><span style="color:#383838"> value;</span></div><div class="ln" style="left:36.70px;top:37.50px">2314</div><div class="cl" style="left:302.00px;top:37.50px"><span style="color:#383838">}</span></div><div class="ln" style="left:36.70px;top:75.50px">2315</div><div class="ln" style="left:36.70px;top:113.50px">2316</div><div class="cl" style="left:243.00px;top:113.50px"><span style="color:#383838">} </span><span style="color:#af00db;font-weight:700">else</span><span style="color:#383838"> </span><span style="color:#af00db;font-weight:700">if</span><span style="color:#383838"> ( hooks </span><span style="color:#000080;font-weight:700">&amp;&amp;</span><span style="color:#383838"> </span><span style="color:#a31515">&quot;get&quot;</span><span style="color:#383838"> </span><span style="color:#0000ff;font-weight:700">in</span><span style="color:#383838"> hooks</span></div><div class="ln" style="left:36.70px;top:151.50px">2317</div><div class="cl" style="left:302.00px;top:151.50px"><span style="color:#af00db;font-weight:700">return</span><span style="color:#383838"> ret;</span></div><div class="ln" style="left:36.70px;top:189.50px">2318</div><div class="ln" style="left:36.70px;top:227.50px">2319</div><div class="cl" style="left:243.00px;top:227.50px"><span style="color:#383838">} </span><span style="color:#af00db;font-weight:700">else</span><span style="color:#383838"> {</span></div><div class="ln" style="left:36.70px;top:265.50px">2320</div><div class="ln" style="left:36.70px;top:303.50px">2321</div><div class="cl" style="left:302.00px;top:303.50px"><span style="color:#383838">ret </span><span style="color:#000080;font-weight:700">=</span><span style="color:#383838"> elem.</span><span style="color:#795e26">getAttribute</span><span style="color:#383838">( name )</span></div><div class="ln" style="left:36.70px;top:341.50px">2322</div><div class="ln" style="left:36.70px;top:379.50px">2323</div><div class="cl" style="left:302.00px;top:379.50px"><span style="color:#008000">// Non-existent attributes return</span></div><div class="ln" style="left:36.70px;top:417.50px">2324</div><div class="cl" style="left:302.00px;top:417.50px"><span style="color:#af00db;font-weight:700">return</span><span style="color:#383838"> ret </span><span class="eq">   </span><span style="color:#383838"> </span><span style="color:#0000ff;font-weight:700">null</span><span style="color:#383838"> </span><span style="color:#000080;font-weight:700">?</span></div><div class="ln" style="left:36.70px;top:455.50px">2325</div><div class="cl" style="left:361.00px;top:455.50px"><span style="color:#0000ff;font-weight:700">undefined</span><span style="color:#383838"> </span><span style="color:#000080;font-weight:700">:</span></div><div class="ln" style="left:36.70px;top:493.50px">2326</div><div class="cl" style="left:361.00px;top:493.50px"><span style="color:#383838">ret;</span></div><div class="ln" style="left:36.70px;top:531.50px">2327</div><div class="cl" style="left:243.00px;top:531.50px"><span style="color:#383838">}</span></div><div class="ln" style="left:36.70px;top:569.50px">2328</div><div class="cl" style="left:184.00px;top:569.50px"><span style="color:#383838">},</span></div><div class="ln" style="left:36.70px;top:607.50px">2329</div><div class="ln" style="left:36.70px;top:645.50px">2330</div><div class="cl" style="left:184.00px;top:645.50px"><span style="color:#795e26">removeAttr</span><span style="color:#383838">: </span><span style="color:#0000ff;font-weight:700">function</span><span style="color:#383838">( elem, value ) {</span></div><div class="ln" style="left:36.70px;top:683.50px">2331</div><div class="cl" style="left:243.00px;top:683.50px"><span style="color:#0000ff;font-weight:700">var</span><span style="color:#383838"> propName, attrNames, name, isBool</span></div><div class="ln" style="left:36.70px;top:721.50px">2332</div><div class="cl" style="left:302.00px;top:721.50px"><span style="color:#383838">i </span><span style="color:#000080;font-weight:700">=</span><span style="color:#383838"> </span><span style="color:#098658;font-weight:700">0</span><span style="color:#383838">;</span></div><div class="ln" style="left:36.70px;top:759.50px">2333</div><div class="ln" style="left:36.70px;top:797.50px">2334</div><div class="cl" style="left:243.00px;top:797.50px"><span style="color:#af00db;font-weight:700">if</span><span style="color:#383838"> ( value </span><span style="color:#000080;font-weight:700">&amp;&amp;</span><span style="color:#383838"> elem.nodeType </span><span class="eq">   </span><span style="color:#383838"> </span><span style="color:#098658;font-weight:700">1</span><span style="color:#383838"> ) {</span></div><div class="ln" style="left:36.70px;top:835.50px">2335</div><div class="ln" style="left:36.70px;top:873.50px">2336</div><div class="cl" style="left:302.00px;top:873.50px"><span style="color:#383838">attrNames </span><span style="color:#000080;font-weight:700">=</span><span style="color:#383838"> value.</span><span style="color:#795e26">split</span><span style="color:#383838">( core_rspace )</span></div><div class="ln" style="left:36.70px;top:911.50px">2337</div></div>
<div style="position:absolute;left:1194px;top:207px;width:722px;height:947px;overflow:hidden"><div style="position:absolute;left:128px;top:607px;width:594px;height:38px;background:#ebebeb"></div><svg style="position:absolute;left:0;top:0" width="722" height="947" viewBox="1194 207 722 947"><rect x="1320.0" y="206" width="2" height="38" fill="#8f8f8f"/><rect x="1379.0" y="206" width="2" height="38" fill="#d9d9d9"/><rect x="1438.0" y="206" width="2" height="38" fill="#d9d9d9"/><rect x="1497.0" y="206" width="2" height="38" fill="#d9d9d9"/><rect x="1320.0" y="223.0" width="2" height="2" fill="#b4b4b4"/><path d="M1322.0 224.0 H1333.0 M1326.2 217.2 L1333.0 224.0 L1326.2 230.8" stroke="#c8c8c8" stroke-width="1.3" fill="none"/><rect x="1379.0" y="223.0" width="2" height="2" fill="#b4b4b4"/><path d="M1381.0 224.0 H1392.0 M1385.2 217.2 L1392.0 224.0 L1385.2 230.8" stroke="#c8c8c8" stroke-width="1.3" fill="none"/><rect x="1438.0" y="223.0" width="2" height="2" fill="#b4b4b4"/><path d="M1440.0 224.0 H1451.0 M1444.2 217.2 L1451.0 224.0 L1444.2 230.8" stroke="#c8c8c8" stroke-width="1.3" fill="none"/><rect x="1497.0" y="223.0" width="2" height="2" fill="#b4b4b4"/><path d="M1499.0 224.0 H1510.0 M1503.2 217.2 L1510.0 224.0 L1503.2 230.8" stroke="#c8c8c8" stroke-width="1.3" fill="none"/><rect x="1320.0" y="244" width="2" height="38" fill="#8f8f8f"/><rect x="1379.0" y="244" width="2" height="38" fill="#d9d9d9"/><rect x="1438.0" y="244" width="2" height="38" fill="#d9d9d9"/><rect x="1320.0" y="261.0" width="2" height="2" fill="#b4b4b4"/><path d="M1322.0 262.0 H1333.0 M1326.2 255.2 L1333.0 262.0 L1326.2 268.8" stroke="#c8c8c8" stroke-width="1.3" fill="none"/><rect x="1379.0" y="261.0" width="2" height="2" fill="#b4b4b4"/><path d="M1381.0 262.0 H1392.0 M1385.2 255.2 L1392.0 262.0 L1385.2 268.8" stroke="#c8c8c8" stroke-width="1.3" fill="none"/><rect x="1438.0" y="261.0" width="2" height="2" fill="#b4b4b4"/><path d="M1440.0 262.0 H1451.0 M1444.2 255.2 L1451.0 262.0 L1444.2 268.8" stroke="#c8c8c8" stroke-width="1.3" fill="none"/><rect x="1320.0" y="282" width="2" height="38" fill="#8f8f8f"/><rect x="1379.0" y="282" width="2" height="38" fill="#d9d9d9"/><rect x="1438.0" y="282" width="2" height="38" fill="#d9d9d9"/><rect x="1320.0" y="320" width="2" height="38" fill="#8f8f8f"/><rect x="1379.0" y="320" width="2" height="38" fill="#d9d9d9"/><rect x="1320.0" y="337.0" width="2" height="2" fill="#b4b4b4"/><path d="M1322.0 338.0 H1333.0 M1326.2 331.2 L1333.0 338.0 L1326.2 344.8" stroke="#c8c8c8" stroke-width="1.3" fill="none"/><rect x="1379.0" y="337.0" width="2" height="2" fill="#b4b4b4"/><path d="M1381.0 338.0 H1392.0 M1385.2 331.2 L1392.0 338.0 L1385.2 344.8" stroke="#c8c8c8" stroke-width="1.3" fill="none"/><rect x="1320.0" y="358" width="2" height="38" fill="#8f8f8f"/><rect x="1379.0" y="358" width="2" height="38" fill="#d9d9d9"/><rect x="1438.0" y="358" width="2" height="38" fill="#d9d9d9"/><rect x="1320.0" y="375.0" width="2" height="2" fill="#b4b4b4"/><path d="M1322.0 376.0 H1333.0 M1326.2 369.2 L1333.0 376.0 L1326.2 382.8" stroke="#c8c8c8" stroke-width="1.3" fill="none"/><rect x="1379.0" y="375.0" width="2" height="2" fill="#b4b4b4"/><path d="M1381.0 376.0 H1392.0 M1385.2 369.2 L1392.0 376.0 L1385.2 382.8" stroke="#c8c8c8" stroke-width="1.3" fill="none"/><rect x="1438.0" y="375.0" width="2" height="2" fill="#b4b4b4"/><path d="M1440.0 376.0 H1451.0 M1444.2 369.2 L1451.0 376.0 L1444.2 382.8" stroke="#c8c8c8" stroke-width="1.3" fill="none"/><rect x="1320.0" y="396" width="2" height="38" fill="#8f8f8f"/><rect x="1379.0" y="396" width="2" height="38" fill="#d9d9d9"/><rect x="1438.0" y="396" width="2" height="38" fill="#d9d9d9"/><rect x="1320.0" y="434" width="2" height="38" fill="#8f8f8f"/><rect x="1379.0" y="434" width="2" height="38" fill="#d9d9d9"/><rect x="1320.0" y="451.0" width="2" height="2" fill="#b4b4b4"/><path d="M1322.0 452.0 H1333.0 M1326.2 445.2 L1333.0 452.0 L1326.2 458.8" stroke="#c8c8c8" stroke-width="1.3" fill="none"/><rect x="1379.0" y="451.0" width="2" height="2" fill="#b4b4b4"/><path d="M1381.0 452.0 H1392.0 M1385.2 445.2 L1392.0 452.0 L1385.2 458.8" stroke="#c8c8c8" stroke-width="1.3" fill="none"/><rect x="1320.0" y="472" width="2" height="38" fill="#8f8f8f"/><rect x="1379.0" y="472" width="2" height="38" fill="#d9d9d9"/><rect x="1438.0" y="472" width="2" height="38" fill="#d9d9d9"/><rect x="1320.0" y="510" width="2" height="38" fill="#8f8f8f"/><rect x="1379.0" y="510" width="2" height="38" fill="#d9d9d9"/><rect x="1438.0" y="510" width="2" height="38" fill="#d9d9d9"/><rect x="1320.0" y="527.0" width="2" height="2" fill="#b4b4b4"/><path d="M1322.0 528.0 H1333.0 M1326.2 521.2 L1333.0 528.0 L1326.2 534.8" stroke="#c8c8c8" stroke-width="1.3" fill="none"/><rect x="1379.0" y="527.0" width="2" height="2" fill="#b4b4b4"/><path d="M1381.0 528.0 H1392.0 M1385.2 521.2 L1392.0 528.0 L1385.2 534.8" stroke="#c8c8c8" stroke-width="1.3" fill="none"/><rect x="1438.0" y="527.0" width="2" height="2" fill="#b4b4b4"/><path d="M1440.0 528.0 H1451.0 M1444.2 521.2 L1451.0 528.0 L1444.2 534.8" stroke="#c8c8c8" stroke-width="1.3" fill="none"/><rect x="1320.0" y="548" width="2" height="38" fill="#8f8f8f"/><rect x="1379.0" y="548" width="2" height="38" fill="#d9d9d9"/><rect x="1438.0" y="548" width="2" height="38" fill="#d9d9d9"/><rect x="1320.0" y="586" width="2" height="38" fill="#8f8f8f"/><rect x="1379.0" y="586" width="2" height="38" fill="#d9d9d9"/><rect x="1438.0" y="586" width="2" height="38" fill="#d9d9d9"/><rect x="1320.0" y="603.0" width="2" height="2" fill="#b4b4b4"/><path d="M1322.0 604.0 H1333.0 M1326.2 597.2 L1333.0 604.0 L1326.2 610.8" stroke="#c8c8c8" stroke-width="1.3" fill="none"/><rect x="1379.0" y="603.0" width="2" height="2" fill="#b4b4b4"/><path d="M1381.0 604.0 H1392.0 M1385.2 597.2 L1392.0 604.0 L1385.2 610.8" stroke="#c8c8c8" stroke-width="1.3" fill="none"/><rect x="1438.0" y="603.0" width="2" height="2" fill="#b4b4b4"/><path d="M1440.0 604.0 H1451.0 M1444.2 597.2 L1451.0 604.0 L1444.2 610.8" stroke="#c8c8c8" stroke-width="1.3" fill="none"/><rect x="1320.0" y="624" width="2" height="38" fill="#8f8f8f"/><rect x="1379.0" y="624" width="2" height="38" fill="#d9d9d9"/><rect x="1438.0" y="624" width="2" height="38" fill="#d9d9d9"/><rect x="1320.0" y="641.0" width="2" height="2" fill="#b4b4b4"/><path d="M1322.0 642.0 H1333.0 M1326.2 635.2 L1333.0 642.0 L1326.2 648.8" stroke="#c8c8c8" stroke-width="1.3" fill="none"/><rect x="1379.0" y="641.0" width="2" height="2" fill="#b4b4b4"/><path d="M1381.0 642.0 H1392.0 M1385.2 635.2 L1392.0 642.0 L1385.2 648.8" stroke="#c8c8c8" stroke-width="1.3" fill="none"/><rect x="1438.0" y="641.0" width="2" height="2" fill="#b4b4b4"/><path d="M1440.0 642.0 H1451.0 M1444.2 635.2 L1451.0 642.0 L1444.2 648.8" stroke="#c8c8c8" stroke-width="1.3" fill="none"/><rect x="1320.0" y="662" width="2" height="38" fill="#8f8f8f"/><rect x="1379.0" y="662" width="2" height="38" fill="#d9d9d9"/><rect x="1438.0" y="662" width="2" height="38" fill="#d9d9d9"/><rect x="1497.0" y="662" width="2" height="38" fill="#d9d9d9"/><rect x="1556.0" y="662" width="2" height="38" fill="#d9d9d9"/><rect x="1320.0" y="679.0" width="2" height="2" fill="#b4b4b4"/><path d="M1322.0 680.0 H1333.0 M1326.2 673.2 L1333.0 680.0 L1326.2 686.8" stroke="#c8c8c8" stroke-width="1.3" fill="none"/><rect x="1379.0" y="679.0" width="2" height="2" fill="#b4b4b4"/><path d="M1381.0 680.0 H1392.0 M1385.2 673.2 L1392.0 680.0 L1385.2 686.8" stroke="#c8c8c8" stroke-width="1.3" fill="none"/><rect x="1438.0" y="679.0" width="2" height="2" fill="#b4b4b4"/><path d="M1440.0 680.0 H1451.0 M1444.2 673.2 L1451.0 680.0 L1444.2 686.8" stroke="#c8c8c8" stroke-width="1.3" fill="none"/><rect x="1497.0" y="679.0" width="2" height="2" fill="#b4b4b4"/><path d="M1499.0 680.0 H1510.0 M1503.2 673.2 L1510.0 680.0 L1503.2 686.8" stroke="#c8c8c8" stroke-width="1.3" fill="none"/><rect x="1556.0" y="679.0" width="2" height="2" fill="#b4b4b4"/><path d="M1558.0 680.0 H1569.0 M1562.2 673.2 L1569.0 680.0 L1562.2 686.8" stroke="#c8c8c8" stroke-width="1.3" fill="none"/><rect x="1320.0" y="700" width="2" height="38" fill="#8f8f8f"/><rect x="1379.0" y="700" width="2" height="38" fill="#d9d9d9"/><rect x="1438.0" y="700" width="2" height="38" fill="#d9d9d9"/><rect x="1497.0" y="700" width="2" height="38" fill="#d9d9d9"/><rect x="1556.0" y="700" width="2" height="38" fill="#d9d9d9"/><rect x="1320.0" y="717.0" width="2" height="2" fill="#b4b4b4"/><path d="M1322.0 718.0 H1333.0 M1326.2 711.2 L1333.0 718.0 L1326.2 724.8" stroke="#c8c8c8" stroke-width="1.3" fill="none"/><rect x="1379.0" y="717.0" width="2" height="2" fill="#b4b4b4"/><path d="M1381.0 718.0 H1392.0 M1385.2 711.2 L1392.0 718.0 L1385.2 724.8" stroke="#c8c8c8" stroke-width="1.3" fill="none"/><rect x="1438.0" y="717.0" width="2" height="2" fill="#b4b4b4"/><path d="M1440.0 718.0 H1451.0 M1444.2 711.2 L1451.0 718.0 L1444.2 724.8" stroke="#c8c8c8" stroke-width="1.3" fill="none"/><rect x="1497.0" y="717.0" width="2" height="2" fill="#b4b4b4"/><path d="M1499.0 718.0 H1510.0 M1503.2 711.2 L1510.0 718.0 L1503.2 724.8" stroke="#c8c8c8" stroke-width="1.3" fill="none"/><rect x="1556.0" y="717.0" width="2" height="2" fill="#b4b4b4"/><path d="M1558.0 718.0 H1569.0 M1562.2 711.2 L1569.0 718.0 L1562.2 724.8" stroke="#c8c8c8" stroke-width="1.3" fill="none"/><rect x="1320.0" y="738" width="2" height="38" fill="#8f8f8f"/><rect x="1379.0" y="738" width="2" height="38" fill="#d9d9d9"/><rect x="1320.0" y="755.0" width="2" height="2" fill="#b4b4b4"/><path d="M1322.0 756.0 H1333.0 M1326.2 749.2 L1333.0 756.0 L1326.2 762.8" stroke="#c8c8c8" stroke-width="1.3" fill="none"/><rect x="1379.0" y="755.0" width="2" height="2" fill="#b4b4b4"/><path d="M1381.0 756.0 H1392.0 M1385.2 749.2 L1392.0 756.0 L1385.2 762.8" stroke="#c8c8c8" stroke-width="1.3" fill="none"/><rect x="1320.0" y="776" width="2" height="38" fill="#8f8f8f"/><rect x="1320.0" y="793.0" width="2" height="2" fill="#b4b4b4"/><path d="M1322.0 794.0 H1333.0 M1326.2 787.2 L1333.0 794.0 L1326.2 800.8" stroke="#c8c8c8" stroke-width="1.3" fill="none"/><rect x="1320.0" y="814" width="2" height="38" fill="#8f8f8f"/><rect x="1320.0" y="852" width="2" height="38" fill="#8f8f8f"/><rect x="1320.0" y="869.0" width="2" height="2" fill="#b4b4b4"/><path d="M1322.0 870.0 H1333.0 M1326.2 863.2 L1333.0 870.0 L1326.2 876.8" stroke="#c8c8c8" stroke-width="1.3" fill="none"/><rect x="1320.0" y="890" width="2" height="38" fill="#8f8f8f"/><rect x="1379.0" y="890" width="2" height="38" fill="#d9d9d9"/><rect x="1320.0" y="907.0" width="2" height="2" fill="#b4b4b4"/><path d="M1322.0 908.0 H1333.0 M1326.2 901.2 L1333.0 908.0 L1326.2 914.8" stroke="#c8c8c8" stroke-width="1.3" fill="none"/><rect x="1379.0" y="907.0" width="2" height="2" fill="#b4b4b4"/><path d="M1381.0 908.0 H1392.0 M1385.2 901.2 L1392.0 908.0 L1385.2 914.8" stroke="#c8c8c8" stroke-width="1.3" fill="none"/><rect x="1320.0" y="928" width="2" height="38" fill="#8f8f8f"/><rect x="1379.0" y="928" width="2" height="38" fill="#d9d9d9"/><rect x="1438.0" y="928" width="2" height="38" fill="#d9d9d9"/><rect x="1320.0" y="945.0" width="2" height="2" fill="#b4b4b4"/><path d="M1322.0 946.0 H1333.0 M1326.2 939.2 L1333.0 946.0 L1326.2 952.8" stroke="#c8c8c8" stroke-width="1.3" fill="none"/><rect x="1379.0" y="945.0" width="2" height="2" fill="#b4b4b4"/><path d="M1381.0 946.0 H1392.0 M1385.2 939.2 L1392.0 946.0 L1385.2 952.8" stroke="#c8c8c8" stroke-width="1.3" fill="none"/><rect x="1438.0" y="945.0" width="2" height="2" fill="#b4b4b4"/><path d="M1440.0 946.0 H1451.0 M1444.2 939.2 L1451.0 946.0 L1444.2 952.8" stroke="#c8c8c8" stroke-width="1.3" fill="none"/><rect x="1320.0" y="966" width="2" height="38" fill="#8f8f8f"/><rect x="1379.0" y="966" width="2" height="38" fill="#d9d9d9"/><rect x="1438.0" y="966" width="2" height="38" fill="#d9d9d9"/><rect x="1320.0" y="1004" width="2" height="38" fill="#8f8f8f"/><rect x="1379.0" y="1004" width="2" height="38" fill="#d9d9d9"/><rect x="1320.0" y="1021.0" width="2" height="2" fill="#b4b4b4"/><path d="M1322.0 1022.0 H1333.0 M1326.2 1015.2 L1333.0 1022.0 L1326.2 1028.8" stroke="#c8c8c8" stroke-width="1.3" fill="none"/><rect x="1379.0" y="1021.0" width="2" height="2" fill="#b4b4b4"/><path d="M1381.0 1022.0 H1392.0 M1385.2 1015.2 L1392.0 1022.0 L1385.2 1028.8" stroke="#c8c8c8" stroke-width="1.3" fill="none"/><rect x="1320.0" y="1042" width="2" height="38" fill="#8f8f8f"/><rect x="1379.0" y="1042" width="2" height="38" fill="#d9d9d9"/><rect x="1438.0" y="1042" width="2" height="38" fill="#d9d9d9"/><rect x="1320.0" y="1080" width="2" height="38" fill="#8f8f8f"/><rect x="1379.0" y="1080" width="2" height="38" fill="#d9d9d9"/><rect x="1438.0" y="1080" width="2" height="38" fill="#d9d9d9"/><rect x="1320.0" y="1097.0" width="2" height="2" fill="#b4b4b4"/><path d="M1322.0 1098.0 H1333.0 M1326.2 1091.2 L1333.0 1098.0 L1326.2 1104.8" stroke="#c8c8c8" stroke-width="1.3" fill="none"/><rect x="1379.0" y="1097.0" width="2" height="2" fill="#b4b4b4"/><path d="M1381.0 1098.0 H1392.0 M1385.2 1091.2 L1392.0 1098.0 L1385.2 1104.8" stroke="#c8c8c8" stroke-width="1.3" fill="none"/><rect x="1438.0" y="1097.0" width="2" height="2" fill="#b4b4b4"/><path d="M1440.0 1098.0 H1451.0 M1444.2 1091.2 L1451.0 1098.0 L1444.2 1104.8" stroke="#c8c8c8" stroke-width="1.3" fill="none"/><rect x="1320.0" y="1118" width="2" height="38" fill="#8f8f8f"/><rect x="1379.0" y="1118" width="2" height="38" fill="#d9d9d9"/><rect x="1438.0" y="1118" width="2" height="38" fill="#d9d9d9"/></svg><div class="ln" style="left:38.70px;top:-0.50px">2313</div><div class="cl" style="left:363.00px;top:-0.50px"><span style="color:#af00db;font-weight:700">return</span><span style="color:#383838"> value;</span></div><div class="ln" style="left:38.70px;top:37.50px">2314</div><div class="cl" style="left:304.00px;top:37.50px"><span style="color:#383838">}</span></div><div class="ln" style="left:38.70px;top:75.50px">2315</div><div class="ln" style="left:38.70px;top:113.50px">2316</div><div class="cl" style="left:245.00px;top:113.50px"><span style="color:#383838">} </span><span style="color:#af00db;font-weight:700">else</span><span style="color:#383838"> </span><span style="color:#af00db;font-weight:700">if</span><span style="color:#383838"> ( hooks </span><span style="color:#000080;font-weight:700">&amp;&amp;</span><span style="color:#383838"> </span><span style="color:#a31515">&quot;get&quot;</span><span style="color:#383838"> </span><span style="color:#0000ff;font-weight:700">in</span><span style="color:#383838"> hooks</span></div><div class="ln" style="left:38.70px;top:151.50px">2317</div><div class="cl" style="left:304.00px;top:151.50px"><span style="color:#af00db;font-weight:700">return</span><span style="color:#383838"> ret;</span></div><div class="ln" style="left:38.70px;top:189.50px">2318</div><div class="ln" style="left:38.70px;top:227.50px">2319</div><div class="cl" style="left:245.00px;top:227.50px"><span style="color:#383838">} </span><span style="color:#af00db;font-weight:700">else</span><span style="color:#383838"> {</span></div><div class="ln" style="left:38.70px;top:265.50px">2320</div><div class="ln" style="left:38.70px;top:303.50px">2321</div><div class="cl" style="left:304.00px;top:303.50px"><span style="color:#383838">ret </span><span style="color:#000080;font-weight:700">=</span><span style="color:#383838"> elem.</span><span style="color:#795e26">getAttribute</span><span style="color:#383838">( name )</span></div><div class="ln" style="left:38.70px;top:341.50px">2322</div><div class="ln" style="left:38.70px;top:379.50px">2323</div><div class="cl" style="left:304.00px;top:379.50px"><span style="color:#008000">// Non-existent attributes return</span></div><div class="ln" style="left:38.70px;top:417.50px">2324</div><div class="cl" style="left:304.00px;top:417.50px"><span style="color:#af00db;font-weight:700">return</span><span style="color:#383838"> ret </span><span class="eq">   </span><span style="color:#383838"> </span><span style="color:#0000ff;font-weight:700">null</span><span style="color:#383838"> </span><span style="color:#000080;font-weight:700">?</span></div><div class="ln" style="left:38.70px;top:455.50px">2325</div><div class="cl" style="left:422.00px;top:455.50px"><span style="color:#0000ff;font-weight:700">undefined</span><span style="color:#383838"> </span><span style="color:#000080;font-weight:700">:</span></div><div class="ln" style="left:38.70px;top:493.50px">2326</div><div class="cl" style="left:422.00px;top:493.50px"><span style="color:#383838">ret;</span></div><div class="ln" style="left:38.70px;top:531.50px">2327</div><div class="cl" style="left:245.00px;top:531.50px"><span style="color:#383838">}</span></div><div class="ln" style="left:38.70px;top:569.50px">2328</div><div class="cl" style="left:186.00px;top:569.50px"><span style="color:#383838">},</span></div><div class="ln" style="left:38.70px;top:607.50px">2329</div><div class="ln" style="left:38.70px;top:645.50px">2330</div><div class="cl" style="left:186.00px;top:645.50px"><span style="color:#795e26">removeAttr</span><span style="color:#383838">: </span><span style="color:#0000ff;font-weight:700">function</span><span style="color:#383838">( elem, value ) {</span></div><div class="ln" style="left:38.70px;top:683.50px">2331</div><div class="cl" style="left:245.00px;top:683.50px"><span style="color:#0000ff;font-weight:700">var</span><span style="color:#383838"> propName, attrNames, name, isBool</span></div><div class="ln" style="left:38.70px;top:721.50px">2332</div><div class="cl" style="left:304.00px;top:721.50px"><span style="color:#383838">i </span><span style="color:#000080;font-weight:700">=</span><span style="color:#383838"> </span><span style="color:#098658;font-weight:700">0</span><span style="color:#383838">;</span></div><div class="ln" style="left:38.70px;top:759.50px">2333</div><div class="ln" style="left:38.70px;top:797.50px">2334</div><div class="cl" style="left:245.00px;top:797.50px"><span style="color:#af00db;font-weight:700">if</span><span style="color:#383838"> ( value </span><span style="color:#000080;font-weight:700">&amp;&amp;</span><span style="color:#383838"> elem.nodeType </span><span class="eq">   </span><span style="color:#383838"> </span><span style="color:#098658;font-weight:700">1</span><span style="color:#383838"> ) {</span></div><div class="ln" style="left:38.70px;top:835.50px">2335</div><div class="ln" style="left:38.70px;top:873.50px">2336</div><div class="cl" style="left:304.00px;top:873.50px"><span style="color:#383838">attrNames </span><span style="color:#000080;font-weight:700">=</span><span style="color:#383838"> value.</span><span style="color:#795e26">split</span><span style="color:#383838">( core_rspace )</span></div><div class="ln" style="left:38.70px;top:911.50px">2337</div></div>
<div style="position:absolute;left:1166px;top:428px;width:26px;height:40px;background:#c8c8c8;border-left:1px solid #b4b4b4;box-sizing:border-box"></div>
<div style="position:absolute;left:1888px;top:428px;width:28px;height:40px;background:#c8c8c8"></div>
<div style="position:absolute;left:1889px;top:436px;width:27px;height:4px;background:#4d4d4d"></div>
<div style="position:absolute;left:1916px;top:436px;width:59px;height:2px;background:#d6d6d6"></div>
<div style="position:absolute;left:1482px;top:1038px;width:378px;height:76px;border-radius:9px;background:#007acc"></div>
<span class="t" style="left:1501.62px;top:1076.86px;font-family:'Liberation Sans';font-size:25.80px;font-weight:400;color:#fff;transform:scaleX(0.9845);transform-origin:0 0;">Show Whitespace Differences</span>
<div style="position:absolute;left:36px;top:1154px;width:1939px;height:43px;background:#007acc"></div>
<svg style="position:absolute;left:36px;top:1154px" width="1939" height="43" viewBox="36 1154 1939 43" fill="none" stroke="#fff" stroke-width="2">
<circle cx="73.3" cy="1167.7" r="3.6"/>
<circle cx="73.3" cy="1186.3" r="3.6"/>
<circle cx="86.4" cy="1172.3" r="3.6"/>
<path d="M73.3 1171.3 L73.3 1182.7"/>
<path d="M73.3 1181 L79 1181 Q 85 1181 86.4 1175.9"/>
<circle cx="228.5" cy="1177" r="11.5"/>
<path d="M223 1171.5 L234 1182.5 M234 1171.5 L223 1182.5"/>
<path d="M282.4 1165.5 L294 1187 L271 1187 Z" stroke-linejoin="miter"/>
<path d="M282.4 1173 L282.4 1180.5 M282.4 1182.5 L282.4 1184.5"/>
<circle cx="1852.2" cy="1177" r="11.5"/>
<path d="M1846 1180 Q1852.2 1186 1858.4 1180"/>
<path d="M1902 1186.5 L1921 1186.5 M1904 1186 L1904 1174 Q1904 1165.5 1911.5 1165.5 Q1919 1165.5 1919 1174 L1919 1186 M1909 1189.5 Q1911.5 1192 1914 1189.5"/>
</svg>
<div style="position:absolute;left:1847px;top:1171px;width:3px;height:3px;border-radius:50%;background:#fff"></div>
<div style="position:absolute;left:1854.5px;top:1171px;width:3px;height:3px;border-radius:50%;background:#fff"></div>
<span class="t" style="left:101.00px;top:1177.56px;font-family:'Liberation Sans';font-size:23.50px;font-weight:400;color:#fff;">master*</span>
<span class="t" style="left:248.96px;top:1177.56px;font-family:'Liberation Sans';font-size:23.50px;font-weight:400;color:#fff;transform:scaleX(1.0364);transform-origin:0 0;">0</span>
<span class="t" style="left:302.95px;top:1177.56px;font-family:'Liberation Sans';font-size:23.50px;font-weight:400;color:#fff;transform:scaleX(1.0455);transform-origin:0 0;">0</span>
<span class="t" style="left:1226.93px;top:1178.06px;font-family:'Liberation Sans';font-size:23.50px;font-weight:400;color:#fff;transform:scaleX(0.9840);transform-origin:0 0;">Ln 2329, Col 1</span>
<span class="t" style="left:1410.00px;top:1178.06px;font-family:'Liberation Sans';font-size:23.50px;font-weight:400;color:#fff;transform:scaleX(0.9397);transform-origin:0 0;">Tab Size: 4</span>
<span class="t" style="left:1549.43px;top:1178.06px;font-family:'Liberation Sans';font-size:23.50px;font-weight:400;color:#fff;transform:scaleX(0.9828);transform-origin:0 0;">UTF-8</span>
<span class="t" style="left:1645.21px;top:1178.06px;font-family:'Liberation Sans';font-size:23.50px;font-weight:400;color:#fff;transform:scaleX(0.8960);transform-origin:0 0;">LF</span>
<span class="t" style="left:1700.04px;top:1178.06px;font-family:'Liberation Sans';font-size:23.50px;font-weight:400;color:#fff;transform:scaleX(0.9615);transform-origin:0 0;">JavaScript</span>
<span class="t" style="left:1930.76px;top:1178.06px;font-family:'Liberation Sans';font-size:23.50px;font-weight:400;color:#fff;transform:scaleX(1.2364);transform-origin:0 0;">2</span>
</body></html>
